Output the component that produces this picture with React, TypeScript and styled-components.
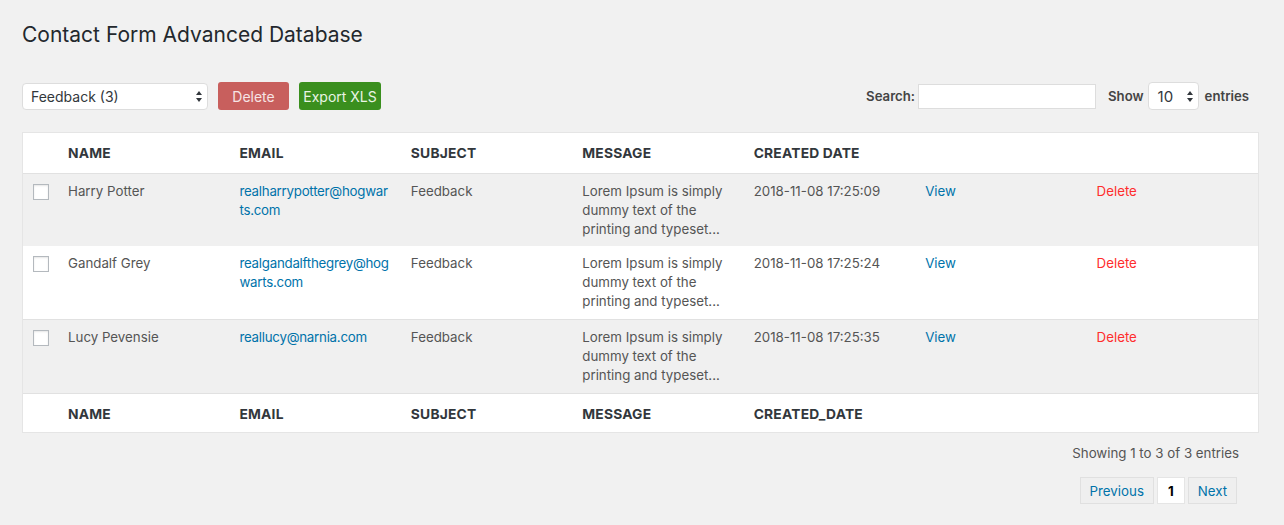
import React from "react";
import styled, { createGlobalStyle } from "styled-components";

const Global = createGlobalStyle`
  html, body { margin: 0; padding: 0; background: #f1f1f1; }
  body { font-family: Inter, "Open Sans", "Liberation Sans", sans-serif; color: #444; font-size: 14px; }
  * { box-sizing: border-box; }
`;

const Page = styled.div`
  padding: 19px 25px 0 22px;
`;

const Title = styled.h1`
  margin: 0;
  font-size: 21px;
  font-weight: 400;
  color: #23282d;
  line-height: 31px;
`;

const Toolbar = styled.div`
  display: flex;
  align-items: center;
  margin-top: 32px;
  height: 28px;
`;

const LeftTools = styled.div`
  display: flex;
  align-items: center;
  gap: 10px;
`;

const RightTools = styled.div`
  margin-left: auto;
  display: flex;
  align-items: center;
  padding-right: 10px;
`;

const SelectBox = styled.div<{ $w: number; $h: number }>`
  position: relative;
  width: ${(p) => p.$w}px;
  height: ${(p) => p.$h}px;
  background: #fff;
  border: 1px solid #ddd;
  border-radius: 4px;
  display: flex;
  align-items: center;
  padding-left: 8px;
  font-size: 14px;
  color: #32373c;
`;

const ShowSelect = styled(SelectBox)`
  margin: 0 6px 0 4px;
  padding-left: 9px;
  font-size: 15px;
`;

const Arrows = styled.svg<{ $top: number }>`
  position: absolute;
  right: 4px;
  top: ${(p) => p.$top}px;
`;

const Btn = styled.button<{ $bg: string; $w: number; $fg: string }>`
  height: 28px;
  width: ${(p) => p.$w}px;
  border: none;
  border-radius: 3px;
  background: ${(p) => p.$bg};
  color: ${(p) => p.$fg};
  font-family: inherit;
  font-size: 14px;
  padding: 0;
`;

const Label = styled.span`
  font-weight: 600;
  color: #444;
  font-size: 13.2px;
`;

const SearchInput = styled.div`
  width: 178px;
  height: 25px;
  background: #fff;
  border: 1px solid #ddd;
  margin-left: 3px;
  margin-right: 12px;
`;

const Table = styled.div`
  margin-top: 22px;
  width: 1237px;
  border: 1px solid #e5e5e5;
  background: #fff;
`;

const Row = styled.div<{ $bg: string; $h: number; $border?: boolean }>`
  display: grid;
  grid-template-columns: 35px repeat(7, 1fr);
  background: ${(p) => p.$bg};
  height: ${(p) => p.$h}px;
  border-top: ${(p) => (p.$border ? "1px solid #e1e1e1" : "none")};
`;

const HeadCell = styled.div`
  padding: 12px 10px 0;
  font-weight: 700;
  font-size: 13.8px;
  color: #32373c;
  text-transform: uppercase;
  letter-spacing: 0.2px;
`;

const Cell = styled.div<{ $color?: string }>`
  padding: 8px 10px 0;
  font-size: 13.3px;
  line-height: 19px;
  color: ${(p) => p.$color || "#555"};
  word-break: break-all;
`;

const EmailCell = styled(Cell)`
  letter-spacing: -0.25px;
`;

const MsgCell = styled(Cell)`
  word-break: normal;
`;

const CheckCell = styled.div`
  padding: 10px 0 0 10px;
`;

const Check = styled.div`
  width: 16px;
  height: 16px;
  border: 1px solid #b4b9be;
  background: #fff;
  box-shadow: inset 0 1px 2px rgba(0, 0, 0, 0.1);
`;

const Info = styled.div`
  text-align: right;
  padding-right: 20px;
  margin-top: 12px;
  color: #555;
  font-size: 13.3px;
  line-height: 17px;
`;

const Pager = styled.div`
  display: flex;
  justify-content: flex-end;
  gap: 3px;
  margin-top: 15px;
  padding-right: 22px;
`;

const PageBtn = styled.div<{ $active?: boolean }>`
  height: 27px;
  padding: 0 ${(p) => (p.$active ? 10 : 9)}px;
  display: flex;
  align-items: center;
  border: 1px solid ${(p) => (p.$active ? "#e5e5e5" : "#e0e0e0")};
  background: ${(p) => (p.$active ? "#fff" : "#efefef")};
  color: ${(p) => (p.$active ? "#000" : "#0073aa")};
  font-weight: ${(p) => (p.$active ? 700 : 400)};
  font-size: 13.3px;
`;

const ArrowIcon = ({ top }: { top: number }) => (
  <Arrows $top={top} width="8" height="13" viewBox="0 0 8 13">
    <path d="M4 1 L7 5 L1 5 Z" fill="#32373c" />
    <path d="M4 12 L7 8 L1 8 Z" fill="#32373c" />
  </Arrows>
);

const rows = [
  { name: "Harry Potter", email: "realharrypotter@hogwarts.com", date: "2018-11-08 17:25:09", bg: "#f0f0f0", h: 73 },
  { name: "Gandalf Grey", email: "realgandalfthegrey@hogwarts.com", date: "2018-11-08 17:25:24", bg: "#fff", h: 73 },
  { name: "Lucy Pevensie", email: "reallucy@narnia.com", date: "2018-11-08 17:25:35", bg: "#f0f0f0", h: 74 },
];

const heads = ["Name", "Email", "Subject", "Message"];

export default function App() {
  return (
    <>
      <Global />
      <Page>
        <Title>Contact Form Advanced Database</Title>
        <Toolbar>
          <LeftTools>
            <SelectBox $w={186} $h={27}>
              Feedback (3)
              <ArrowIcon top={6} />
            </SelectBox>
            <Btn $bg="#c85f5d" $fg="#f6e4e4" $w={71}>Delete</Btn>
            <Btn $bg="#3a8f1e" $fg="#e9f4e5" $w={82}>Export XLS</Btn>
          </LeftTools>
          <RightTools>
            <Label>Search:</Label>
            <SearchInput />
            <Label>Show</Label>
            <ShowSelect $w={51} $h={28}>
              10
              <ArrowIcon top={7} />
            </ShowSelect>
            <Label>entries</Label>
          </RightTools>
        </Toolbar>
        <Table>
          <Row $bg="#fff" $h={40}>
            <div />
            {heads.map((h) => (
              <HeadCell key={h}>{h}</HeadCell>
            ))}
            <HeadCell>Created Date</HeadCell>
            <div />
            <div />
          </Row>
          {rows.map((r) => (
            <Row key={r.name} $bg={r.bg} $h={r.h} $border={r.bg !== "#fff"}>
              <CheckCell>
                <Check />
              </CheckCell>
              <Cell>{r.name}</Cell>
              <EmailCell $color="#0073aa">{r.email}</EmailCell>
              <Cell>Feedback</Cell>
              <MsgCell>Lorem Ipsum is simply dummy text of the printing and typeset...</MsgCell>
              <Cell>{r.date}</Cell>
              <Cell $color="#0073aa">View</Cell>
              <Cell $color="#ff2d2d">Delete</Cell>
            </Row>
          ))}
          <Row $bg="#fff" $h={39} $border>
            <div />
            {heads.map((h) => (
              <HeadCell key={h}>{h}</HeadCell>
            ))}
            <HeadCell>Created_Date</HeadCell>
            <div />
            <div />
          </Row>
        </Table>
        <Info>Showing 1 to 3 of 3 entries</Info>
        <Pager>
          <PageBtn>Previous</PageBtn>
          <PageBtn $active>1</PageBtn>
          <PageBtn>Next</PageBtn>
        </Pager>
      </Page>
    </>
  );
}
